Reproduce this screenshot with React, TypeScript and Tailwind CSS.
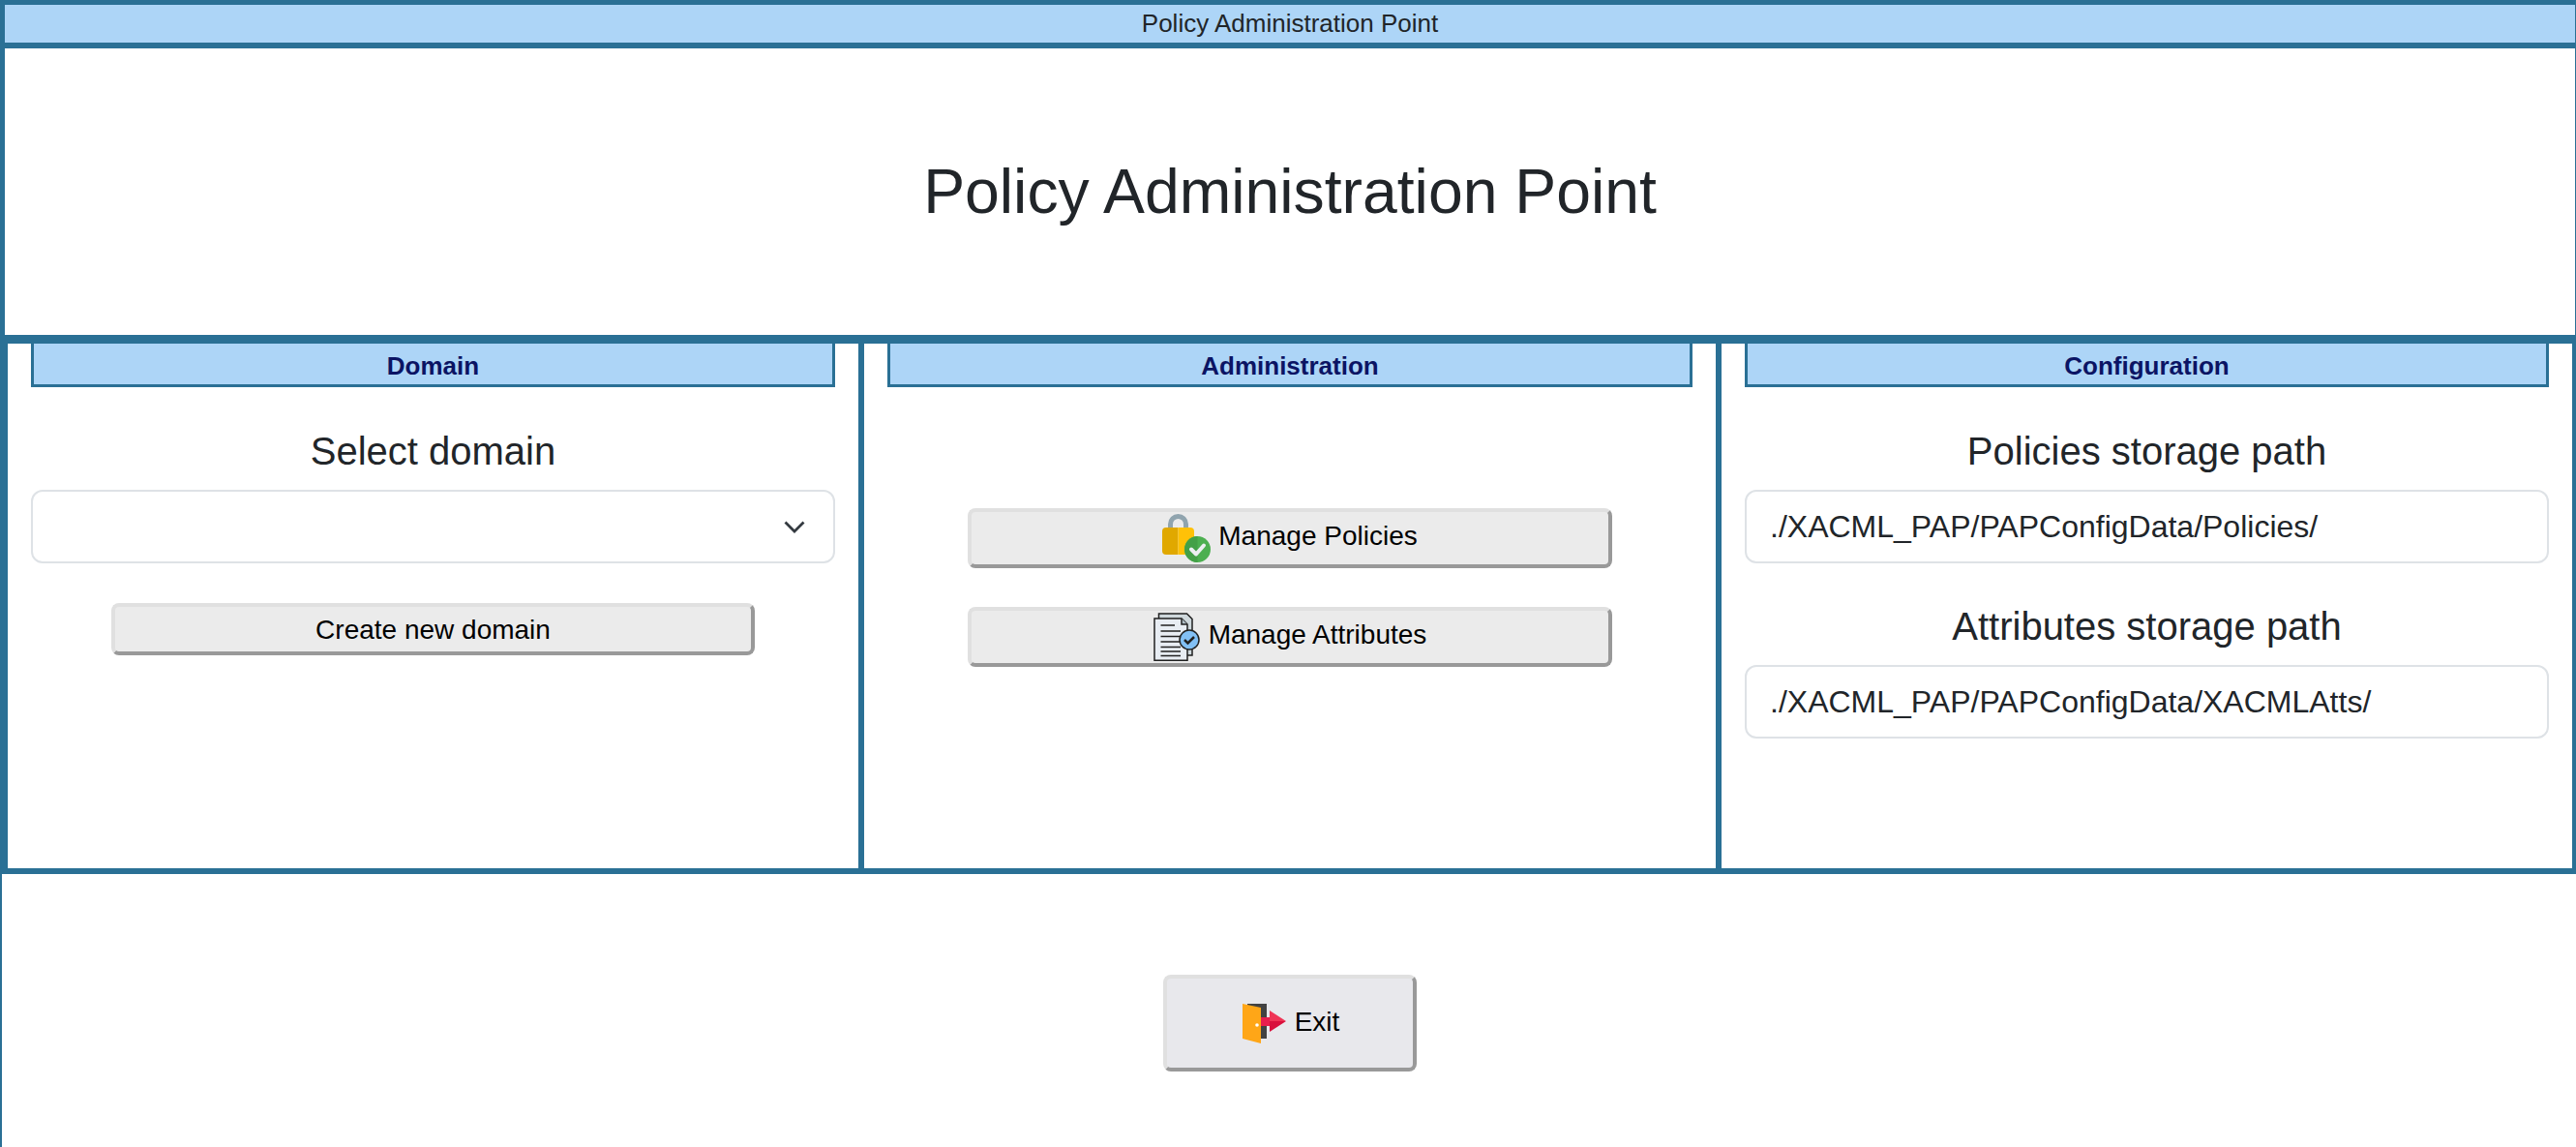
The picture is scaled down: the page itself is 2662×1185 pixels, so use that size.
const LockIcon = () => (
    <svg width="50" height="50" viewBox="0 0 50 50" className="shrink-0">
        <path d="M8.500 18V10.500a8 8 0 0 1 16 0V18" fill="none" stroke="#90a4ae" strokeWidth="5" />
        <path d="M4 14h12.500v28H4a4 4 0 0 1-4-4V18a4 4 0 0 1 4-4z" fill="#e0a800" />
        <path d="M16.500 14H29a4 4 0 0 1 4 4v24H16.500z" fill="#ffc107" />
        <circle cx="36.500" cy="36.500" r="13.500" fill="#4caf50" />
        <path d="M36.500 23a13.500 13.500 0 0 0 0 27z" fill="#43a047" />
        <path d="M30 36.500l5 5 8-9" fill="none" stroke="#eceff1" strokeWidth="4" strokeLinecap="round" strokeLinejoin="round" />
    </svg>
);

const DocsIcon = () => (
    <svg width="48" height="50" viewBox="0 0 48 50" className="shrink-0">
        <path d="M5.500 1h29l5.500 5.500V44H5.500z" fill="#cfd8dc" stroke="#212121" strokeWidth="1.500" />
        <path d="M1 6h28l6 6v37.250H1z" fill="#e8edf3" stroke="#212121" strokeWidth="1.500" />
        <path d="M29 6v6h6" fill="#b0bec5" stroke="#212121" strokeWidth="1.500" />
        <path d="M7.500 13H22M7.500 19H28M7.500 24.500H28M7.500 30H27M7.500 35.500H28M7.500 40H28M7.500 44.500H28" stroke="#212121" strokeWidth="1.500" />
        <circle cx="37" cy="28" r="10" fill="#82c0f5" stroke="#212121" strokeWidth="1.500" />
        <path d="M32 28l3.500 3.500 6.500-6.500" fill="none" stroke="#212121" strokeWidth="2.500" />
    </svg>
);

const ExitIcon = () => (
    <svg width="45" height="41" viewBox="0 0 45 41" className="shrink-0">
        <path d="M5 0h20v36H5z" fill="#424242" />
        <path d="M19 14h9v9h-9z" fill="#e91e4d" />
        <path d="M28 7l17 11H28z" fill="#ef3355" />
        <path d="M28 18h17L28 29z" fill="#d90f3c" />
        <path d="M0 0l19 4v37L0 36z" fill="#ffa617" />
        <circle cx="15" cy="22" r="1.800" fill="#ffffff" />
    </svg>
);

const Chevron = () => (
    <svg width="22" height="13" viewBox="0 0 22 13" className="shrink-0">
        <path d="M1.500 1.500L11 11l9.500-9.500" fill="none" stroke="#343a40" strokeWidth="2.800" />
    </svg>
);

const PanelTitle = ({ text }: { text: string }) => (
    <div className="h-[45px] border-[3px] border-t-0 pt-[5px] border-[#2a7095] bg-[#add5f7] text-[26px] font-bold text-[#0b1464] flex items-center justify-center">
        {text}
    </div>
);

const PathField = ({ value }: { value: string }) => (
    <input
        readOnly
        value={value}
        className="w-full h-[76px] rounded-[12px] border-[2px] border-[#dee2e6] px-[24px] text-[32px] text-[#212529] bg-white outline-none"
    />
);

const btn = "border-[4px] border-t-[#e0e0e0] border-l-[#e0e0e0] border-r-[#999999] border-b-[#999999] rounded-[8px] flex items-center justify-center text-[28px] text-black";

const App = () => {
    return (
        <div className="min-h-screen bg-white font-['Liberation_Sans',Arial,sans-serif]">
            {/* Top bar */}
            <div className="h-[50px] border-t-[5px] border-b-[6px] border-l-[5px] border-r-[1px] border-[#2a7095] bg-[#add5f7] text-[26px] text-[#212529] flex items-center justify-center">
                Policy Administration Point
            </div>

            {/* Heading */}
            <div className="h-[296px] border-l-[5px] border-r-[1px] border-[#2a7095] flex items-center justify-center">
                <h1 className="text-[64.3px] text-[#212529]">Policy Administration Point</h1>
            </div>

            {/* Panels */}
            <div className="h-[557px] border-t-[9px] border-b-[6px] border-l-[8px] border-r-[4px] border-[#2a7095] flex">
                {/* Domain */}
                <section className="w-[879px] px-[24px]">
                    <PanelTitle text="Domain" />
                    <h2 className="mt-[43px] h-[46px] leading-[46px] text-[40px] text-center text-[#212529]">Select domain</h2>
                    <div className="mt-[17px] h-[76px] rounded-[12px] border-[2px] border-[#dee2e6] flex items-center justify-end pr-[29px]">
                        <Chevron />
                    </div>
                    <div className="mt-[41px] flex justify-center">
                        <button className={`${btn} w-[665px] h-[54px] bg-[#ebebeb]`}>
                            <span className="mt-[1px]">Create new domain</span>
                        </button>
                    </div>
                </section>

                {/* Administration */}
                <section className="w-[892px] border-x-[6px] border-[#2a7095] px-[24px]">
                    <PanelTitle text="Administration" />
                    <div className="mt-[125px] flex flex-col items-center gap-[40px]">
                        <button className={`${btn} w-[666px] h-[62px] bg-[#ebebeb] gap-[8px]`}>
                            <LockIcon />
                            <span className="mb-[5px]">Manage Policies</span>
                        </button>
                        <button className={`${btn} w-[666px] h-[62px] bg-[#ebebeb] gap-[9px]`}>
                            <DocsIcon />
                            <span className="mb-[5px]">Manage Attributes</span>
                        </button>
                    </div>
                </section>

                {/* Configuration */}
                <section className="flex-1 px-[24px]">
                    <PanelTitle text="Configuration" />
                    <h2 className="mt-[43px] h-[46px] leading-[46px] text-[40px] text-center text-[#212529]">Policies storage path</h2>
                    <div className="mt-[17px]">
                        <PathField value="./XACML_PAP/PAPConfigData/Policies/" />
                    </div>
                    <h2 className="mt-[42px] h-[46px] leading-[46px] text-[40px] text-center text-[#212529]">Attributes storage path</h2>
                    <div className="mt-[17px]">
                        <PathField value="./XACML_PAP/PAPConfigData/XACMLAtts/" />
                    </div>
                </section>
            </div>

            {/* Footer */}
            <div className="h-[282px] border-l-[2px] border-[#2a7095] flex justify-center pt-[104px]">
                <button className={`${btn} w-[262px] h-[100px] ml-[2px] pl-[2px] bg-[#e8e8ec] gap-[9px]`}>
                    <ExitIcon />
                    <span className="mb-[3px]">Exit</span>
                </button>
            </div>
        </div>
    );
};

export default App;
